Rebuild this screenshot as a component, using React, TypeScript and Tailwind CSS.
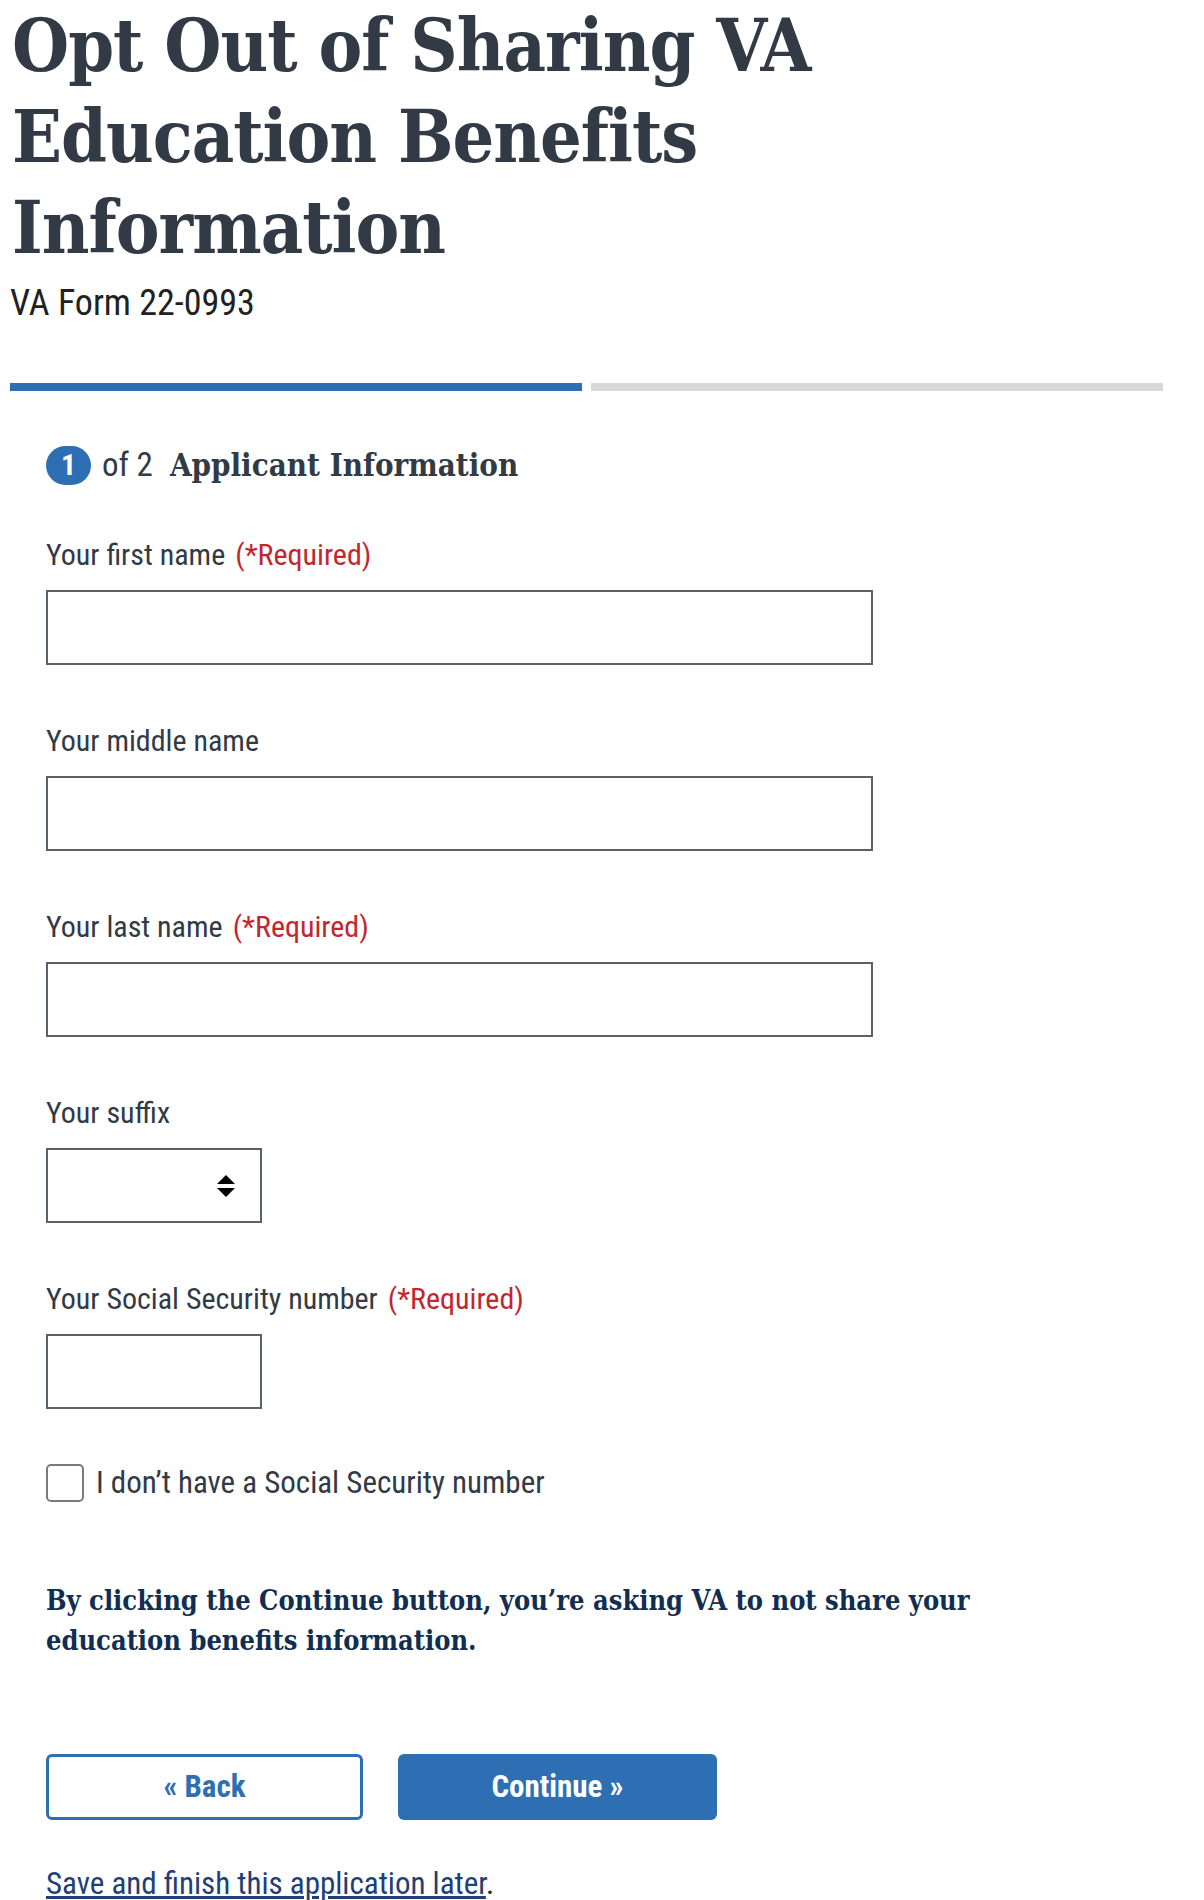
import { useState } from 'react';

const sans = "font-['Roboto','Liberation_Sans',sans-serif] font-stretch-condensed";
const slab = "font-['DejaVu_Serif','Liberation_Serif',serif] font-stretch-condensed";

type Field = { id: string; label: string; required?: boolean; width: 'full' | 'short'; select?: boolean };

const fields: Field[] = [
  { id: 'first', label: 'Your first name', required: true, width: 'full' },
  { id: 'middle', label: 'Your middle name', width: 'full' },
  { id: 'last', label: 'Your last name', required: true, width: 'full' },
  { id: 'suffix', label: 'Your suffix', width: 'short', select: true },
  { id: 'ssn', label: 'Your Social Security number', required: true, width: 'short' },
];

const SortArrows = () => (
  <svg width="20" height="24" viewBox="0 0 20 24" className="pointer-events-none absolute right-[26px] top-1/2 -translate-y-1/2">
    <path d="M10 1 L19 10 L1 10 Z" fill="#000" />
    <path d="M1 14 L19 14 L10 23 Z" fill="#000" />
  </svg>
);

const App = () => {
  const [values, setValues] = useState<Record<string, string>>({});
  const [noSsn, setNoSsn] = useState(false);

  return (
    <div className={`min-h-screen bg-white ${sans} text-[#212121]`}>
      <div className="w-[1163px] pl-[10px]">
        <h1 className={`${slab} max-w-[820px] pl-[2px] text-[73px] leading-[91px] font-bold tracking-[-1px] text-[#323a45]`}>
          Opt Out of Sharing VA Education Benefits Information
        </h1>
        <p className="mt-[10px] text-[36px] leading-[40px] text-[#212121]">VA Form 22-0993</p>

        {/* Progress */}
        <div className="mt-[60px] flex gap-[9px]">
          <div className="h-[8px] flex-1 bg-[#2e6fb4]" />
          <div className="h-[8px] flex-1 bg-[#d6d7d9]" />
        </div>
      </div>

      <div className="pl-[46px]">
        {/* Step header */}
        <div className="mt-[50px] flex h-[48px] items-center">
          <span className="flex h-[39px] w-[45px] items-center justify-center rounded-full bg-[#2e6fb4] text-[30px] font-bold leading-none text-white">
            1
          </span>
          <span className="ml-[11px] text-[33px] text-[#323a45]">of 2</span>
          <span className={`${slab} ml-[17px] text-[31px] font-bold text-[#323a45]`}>
            Applicant Information
          </span>
        </div>

        {/* Fields */}
        <div className="mt-[45px]">
          {fields.map((f) => (
            <div key={f.id} className="mb-[55px] last:mb-[57px]">
              <label htmlFor={f.id} className="flex h-[40px] items-center text-[30px] text-[#323a45]">
                {f.label}
                {f.required && <span className="ml-[10px] text-[#c1272d]">(*Required)</span>}
              </label>
              <div className={`relative mt-[16px] ${f.width === 'full' ? 'w-[827px]' : 'w-[216px]'}`}>
                {f.select ? (
                  <>
                    <select
                      id={f.id}
                      value={values[f.id] ?? ''}
                      onChange={(e) => setValues({ ...values, [f.id]: e.target.value })}
                      className="block h-[75px] w-full appearance-none border-2 border-[#5b616b] bg-white px-3 text-[30px] outline-none"
                    >
                      <option value=""></option>
                      <option value="Jr.">Jr.</option>
                      <option value="Sr.">Sr.</option>
                      <option value="II">II</option>
                      <option value="III">III</option>
                    </select>
                    <SortArrows />
                  </>
                ) : (
                  <input
                    id={f.id}
                    type="text"
                    value={values[f.id] ?? ''}
                    onChange={(e) => setValues({ ...values, [f.id]: e.target.value })}
                    className="block h-[75px] w-full border-2 border-[#5b616b] bg-white px-3 text-[30px] outline-none"
                  />
                )}
              </div>
            </div>
          ))}

          <label className="flex h-[38px] cursor-pointer items-center">
            <input
              type="checkbox"
              checked={noSsn}
              onChange={(e) => setNoSsn(e.target.checked)}
              className="h-[38px] w-[38px] appearance-none rounded-[5px] border-2 border-[#7a7a7a] bg-white"
            />
            <span className="ml-[12px] text-[31px] text-[#323a45]">I don’t have a Social Security number</span>
          </label>
        </div>

        <p className={`${slab} mt-[79px] max-w-[930px] text-[27px] leading-[40px] font-bold text-[#112e51]`}>
          By clicking the Continue button, you’re asking VA to not share your education benefits information.
        </p>

        <div className="mt-[93px] flex gap-[35px]">
          <button className="h-[66px] w-[317px] rounded-[6px] border-[3px] border-[#2e6fb4] bg-white text-[31px] font-bold text-[#2e6fb4]">
            « Back
          </button>
          <button className="h-[66px] w-[319px] rounded-[6px] bg-[#2e6fb4] text-[31px] font-bold text-white">
            Continue »
          </button>
        </div>

        <p className="mt-[44px] text-[31px] leading-[40px]">
          <a href="#" className="text-[#1f3f78] underline">Save and finish this application later</a>
          <span className="text-[#212121]">.</span>
        </p>
      </div>
    </div>
  );
};

export default App;
